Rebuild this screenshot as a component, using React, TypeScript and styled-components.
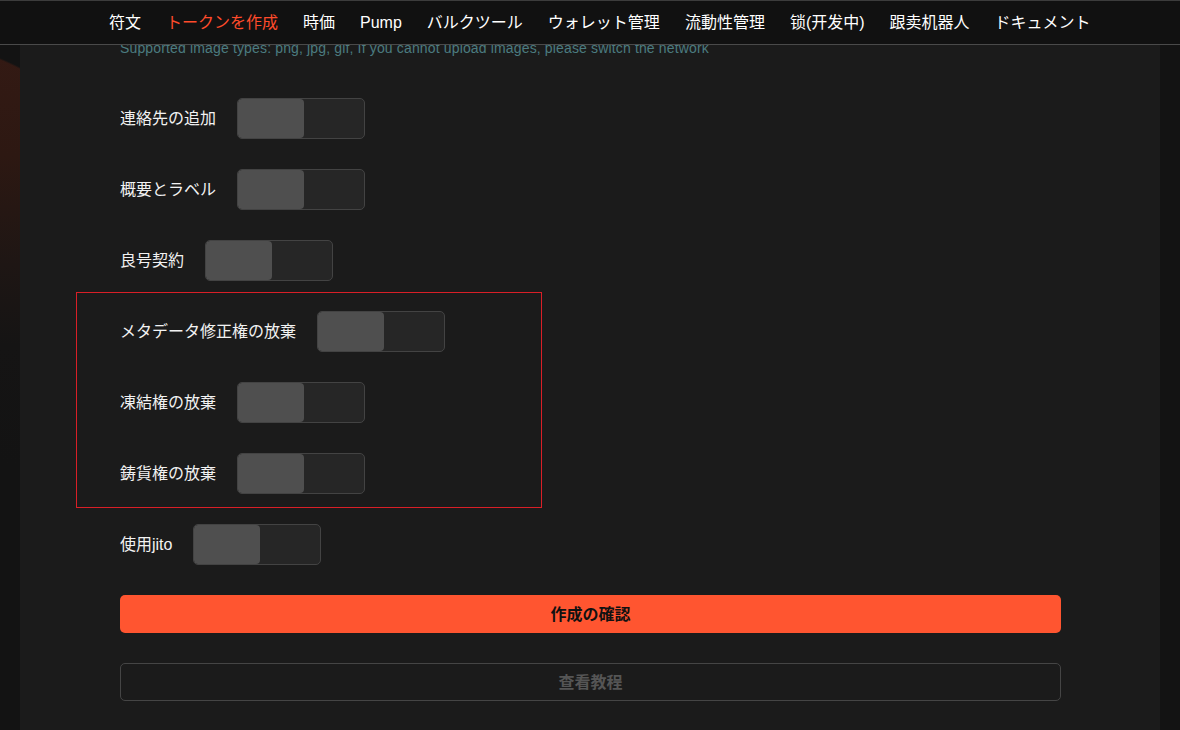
import styled, { createGlobalStyle } from "styled-components";

const GlobalStyle = createGlobalStyle`
  html, body {
    margin: 0;
    padding: 0;
    background: #111;
    font-family: "Liberation Sans", "Noto Sans CJK JP", "Noto Sans CJK SC", sans-serif;
  }
`;

const NAV_ITEMS = [
  "符文",
  "トークンを作成",
  "時価",
  "Pump",
  "バルクツール",
  "ウォレット管理",
  "流動性管理",
  "锁(开发中)",
  "跟卖机器人",
  "ドキュメント",
];

const Page = styled.div`
  height: 100vh;
  display: flex;
  flex-direction: column;
  overflow: hidden;
`;

const Nav = styled.nav`
  position: relative;
  z-index: 2;
  height: 43px;
  flex-shrink: 0;
  display: flex;
  align-items: center;
  gap: 25px;
  padding-left: 109px;
  background: #111;
  border-top: 1px solid #3c3c3c;
  border-bottom: 1px solid #4a4a4a;
`;

const NavItem = styled.a<{ $active?: boolean }>`
  font-size: 16px;
  line-height: 20px;
  color: ${(p) => (p.$active ? "#ff4b2b" : "#fff")};
  text-decoration: none;
  white-space: nowrap;
`;

const Body = styled.div`
  flex: 1;
  display: flex;
  padding: 0 20px;
  background:
    radial-gradient(circle 262px at -100px 255px, transparent 260px, #131313 262px),
    linear-gradient(180deg, #341a14 0, #2d1812 110px, #1e1614 220px, #151414 300px, #131313 420px);
`;

const Panel = styled.main`
  flex: 1;
  background: #1b1b1b;
  padding: 0 99px 0 100px;
  display: flex;
  flex-direction: column;
  gap: 30px;
`;

const Hint = styled.p`
  margin: -7px 0 10px;
  font-size: 14px;
  line-height: 20px;
  letter-spacing: 0.15px;
  color: #4b7b80;
`;

const Row = styled.div`
  display: flex;
  align-items: center;
  height: 41px;
`;

const Label = styled.span`
  font-size: 16px;
  line-height: 20px;
  color: #f2f2f2;
  margin-right: 21px;
  white-space: nowrap;
`;

const Switch = styled.div`
  width: 128px;
  height: 41px;
  box-sizing: border-box;
  border: 1px solid #434343;
  border-radius: 5px;
  background: #262626;
  overflow: hidden;
  display: flex;
`;

const Knob = styled.div`
  width: 66px;
  height: 100%;
  background: #4f4f4f;
  border-radius: 4px;
`;

const Group = styled.div`
  position: relative;
  display: flex;
  flex-direction: column;
  gap: 30px;

  &::after {
    content: "";
    position: absolute;
    left: -44px;
    top: -19px;
    width: 466px;
    height: 216px;
    box-sizing: border-box;
    border: 1px solid #d91f27;
    pointer-events: none;
  }
`;

const Button = styled.button<{ $primary?: boolean }>`
  height: 38px;
  width: 100%;
  padding: 0 0 3px;
  border-radius: 5px;
  font-family: inherit;
  font-size: 16px;
  font-weight: 700;
  cursor: pointer;
  background: ${(p) => (p.$primary ? "#ff5530" : "transparent")};
  color: ${(p) => (p.$primary ? "#111" : "#555")};
  border: ${(p) => (p.$primary ? "none" : "1px solid #454545")};
`;

function Toggle({ label }: { label: string }) {
  return (
    <Row>
      <Label>{label}</Label>
      <Switch>
        <Knob />
      </Switch>
    </Row>
  );
}

export default function App() {
  return (
    <Page>
      <GlobalStyle />
      <Nav>
        {NAV_ITEMS.map((item) => (
          <NavItem key={item} $active={item === "トークンを作成"}>
            {item}
          </NavItem>
        ))}
      </Nav>
      <Body>
        <Panel>
          <Hint>
            Supported image types: png, jpg, gif, If you cannot upload images, please switch the network
          </Hint>
          <Toggle label="連絡先の追加" />
          <Toggle label="概要とラベル" />
          <Toggle label="良号契約" />
          <Group>
            <Toggle label="メタデータ修正権の放棄" />
            <Toggle label="凍結権の放棄" />
            <Toggle label="鋳貨権の放棄" />
          </Group>
          <Toggle label="使用jito" />
          <Button $primary>作成の確認</Button>
          <Button>查看教程</Button>
        </Panel>
      </Body>
    </Page>
  );
}
